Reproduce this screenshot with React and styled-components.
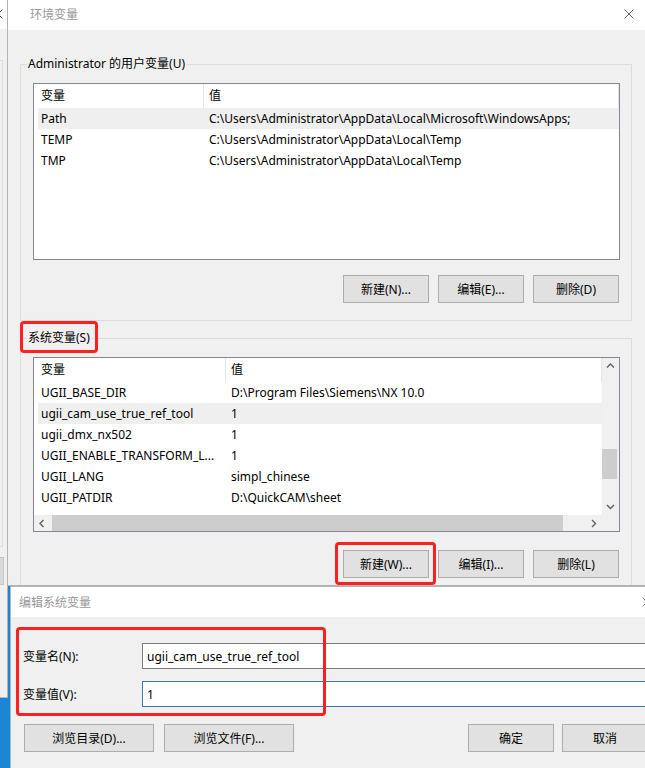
import React from 'react'
import styled, { createGlobalStyle } from 'styled-components'

const GlobalStyle = createGlobalStyle`
  html, body {
    margin: 0;
    padding: 0;
    background: #1b86d3;
  }
`

const Desktop = styled.div`
  position: relative;
  width: 645px;
  height: 768px;
  overflow: hidden;
  background: #1b86d3;
  font-family: "Noto Sans", "Noto Sans CJK SC", sans-serif;
  font-size: 12px;
  color: #000;
`

const Window = styled.div`
  position: absolute;
  left: ${p => p.$x}px;
  top: ${p => p.$y}px;
  width: ${p => p.$w}px;
  height: ${p => p.$h}px;
  box-sizing: border-box;
  border: 1px solid #b4b4b4;
  background: #f0f0f0;
  display: flex;
  flex-direction: column;
  overflow: hidden;
`

const TitleBar = styled.div`
  flex: none;
  box-sizing: border-box;
  height: ${p => p.$h}px;
  background: #fff;
  display: flex;
  align-items: center;
  justify-content: space-between;
  padding: 0 ${p => p.$pr}px ${p => p.$pb || 0}px ${p => p.$pl}px;
  color: #999;
  font-size: 12px;
`

const MainBody = styled.div`
  padding: 26px 0 0 12px;
`

const Group = styled.fieldset`
  box-sizing: border-box;
  width: 612px;
  margin: ${p => p.$mt || 0}px 0 0 0;
  padding: 11px 11px ${p => p.$pb}px 12px;
  border: 1px solid #dcdcdc;
  min-width: 0;
`

const Legend = styled.legend`
  padding: 0 1px;
  margin-left: -6px;
  line-height: 16px;
  font-size: 12px;
  color: #000;
`

const ListBox = styled.div`
  box-sizing: border-box;
  height: ${p => p.$h}px;
  border: 1px solid #828790;
  background: #fff;
  display: grid;
  grid-template-columns: ${p => (p.$scroll ? '1fr 17px' : '1fr')};
  grid-template-rows: ${p => (p.$scroll ? '1fr 16px' : '1fr')};
  overflow: hidden;
`

const ListContent = styled.div`
  display: flex;
  flex-direction: column;
  overflow: hidden;
  min-width: 0;
`

const Header = styled.div`
  flex: none;
  height: 24px;
  display: flex;
`

const HeadCell = styled.div`
  box-sizing: border-box;
  width: ${p => (p.$w ? `${p.$w}px` : 'auto')};
  flex: ${p => (p.$w ? 'none' : '1')};
  padding-left: ${p => p.$pl}px;
  line-height: 24px;
  border-right: 1px solid #e5e5e5;
`

const Row = styled.div`
  flex: none;
  height: 21px;
  margin-left: 4px;
  display: flex;
  align-items: center;
  background: ${p => (p.$selected ? '#efefef' : 'transparent')};
  white-space: nowrap;
`

const Cell = styled.div`
  box-sizing: border-box;
  width: ${p => (p.$w ? `${p.$w}px` : 'auto')};
  flex: ${p => (p.$w ? 'none' : '1')};
  padding-left: ${p => p.$pl}px;
  overflow: hidden;
`

const VScroll = styled.div`
  background: #f0f0f0;
  display: flex;
  flex-direction: column;
`

const HScroll = styled.div`
  background: #f0f0f0;
  display: flex;
`

const Corner = styled.div`
  background: #f0f0f0;
`

const Arrow = styled.div`
  flex: none;
  width: 17px;
  height: ${p => (p.$h ? '16px' : '17px')};
  display: flex;
  align-items: center;
  justify-content: center;
`

const VTrack = styled.div`
  flex: 1;
  padding-top: 74px;
`

const VThumb = styled.div`
  width: 15px;
  height: 30px;
  background: #cdcdcd;
`

const HTrack = styled.div`
  flex: 1;
  padding-left: 1px;
  display: flex;
`

const HThumb = styled.div`
  width: 511px;
  height: 16px;
  background: #cdcdcd;
`

const ButtonRow = styled.div`
  display: flex;
  justify-content: ${p => p.$justify || 'flex-end'};
  gap: ${p => p.$gap || 9}px;
  margin-top: ${p => p.$mt}px;
  padding: 0 ${p => p.$pr || 0}px 0 ${p => p.$pl || 0}px;
`

const ButtonGroup = styled.div`
  display: flex;
  gap: ${p => p.$gap}px;
`

const Button = styled.div`
  box-sizing: border-box;
  width: ${p => p.$w || 86}px;
  height: 28px;
  border: 1px solid #adadad;
  background: #e1e1e1;
  display: flex;
  align-items: center;
  justify-content: center;
  font-size: 12px;
  white-space: nowrap;
`

const Form = styled.div`
  display: grid;
  grid-template-columns: 119px 1fr;
  row-gap: 12px;
  align-items: center;
  padding: 26px 0 0 12px;
`

const FieldLabel = styled.label`
  font-size: 12px;
`

const TextInput = styled.input`
  box-sizing: border-box;
  width: 100%;
  height: 26px;
  margin: 0;
  padding: 0 0 0 4px;
  border: 1px solid ${p => (p.$focused ? '#3d7ab5' : '#7a7a7a')};
  background: #fff;
  font: inherit;
  font-size: 12px;
  color: #000;
  outline: none;
`

const BackBody = styled.div`
  flex: 1;
  display: flex;
  flex-direction: column;
  align-items: flex-end;
  padding-right: 4px;
`

const BackPanel = styled.div`
  width: 200px;
  height: 485px;
  margin-top: 31px;
  border: 1px solid #dcdcdc;
`

const BackButton = styled.div`
  width: 90px;
  height: 28px;
  margin-top: 10px;
  margin-right: -1px;
  box-sizing: border-box;
  border: 1px solid #c4c4c4;
  background: #dadada;
`

const Mark = styled.div`
  position: absolute;
  left: ${p => p.$x}px;
  top: ${p => p.$y}px;
  width: ${p => p.$w}px;
  height: ${p => p.$h}px;
  box-sizing: border-box;
  border: 3px solid #ff1f1f;
  border-radius: 4px;
  pointer-events: none;
`

const CloseIcon = ({ color = '#666' }) => (
  <svg width="10" height="10" viewBox="0 0 10 10">
    <path d="M0.5 0.5L9.5 9.5M9.5 0.5L0.5 9.5" stroke={color} strokeWidth="1" fill="none" />
  </svg>
)

const chevrons = {
  up: 'M1 5.5L4.5 2L8 5.5',
  down: 'M1 3L4.5 6.5L8 3',
  left: 'M5.5 1L2 4.5L5.5 8',
  right: 'M3 1L6.5 4.5L3 8',
}

const Chevron = ({ dir }) => (
  <svg width="9" height="9" viewBox="0 0 9 9">
    <path d={chevrons[dir]} stroke="#606060" strokeWidth="1.4" fill="none" />
  </svg>
)

const userVars = [
  ['Path', 'C:\\Users\\Administrator\\AppData\\Local\\Microsoft\\WindowsApps;', true],
  ['TEMP', 'C:\\Users\\Administrator\\AppData\\Local\\Temp'],
  ['TMP', 'C:\\Users\\Administrator\\AppData\\Local\\Temp'],
]

const sysVars = [
  ['UGII_BASE_DIR', 'D:\\Program Files\\Siemens\\NX 10.0'],
  ['ugii_cam_use_true_ref_tool', '1', true],
  ['ugii_dmx_nx502', '1'],
  ['UGII_ENABLE_TRANSFORM_L...', '1'],
  ['UGII_LANG', 'simpl_chinese'],
  ['UGII_PATDIR', 'D:\\QuickCAM\\sheet'],
]

const VarList = ({ rows, col, height, scroll }) => (
  <ListBox $h={height} $scroll={scroll}>
    <ListContent>
      <Header>
        <HeadCell $w={col} $pl={7}>变量</HeadCell>
        <HeadCell $pl={5}>值</HeadCell>
      </Header>
      {rows.map(([name, value, selected]) => (
        <Row key={name} $selected={selected}>
          <Cell $w={col - 4} $pl={3}>{name}</Cell>
          <Cell $pl={5}>{value}</Cell>
        </Row>
      ))}
    </ListContent>
    {scroll && (
      <>
        <VScroll>
          <Arrow><Chevron dir="up" /></Arrow>
          <VTrack><VThumb /></VTrack>
          <Arrow><Chevron dir="down" /></Arrow>
        </VScroll>
        <HScroll>
          <Arrow $h><Chevron dir="left" /></Arrow>
          <HTrack><HThumb /></HTrack>
          <Arrow $h><Chevron dir="right" /></Arrow>
        </HScroll>
        <Corner />
      </>
    )}
  </ListBox>
)

const App = () => {
  return (
    <Desktop>
      <GlobalStyle />

      <Window $x={-300} $y={-1} $w={308} $h={699}>
        <TitleBar $h={29} $pl={8} $pr={4} $pb={2}>
          <span />
          <CloseIcon color="#444" />
        </TitleBar>
        <BackBody>
          <BackPanel />
          <BackButton />
        </BackBody>
      </Window>

      <Window $x={7} $y={-1} $w={660} $h={587}>
        <TitleBar $h={30} $pl={22} $pr={32} $pb={3}>
          <span>环境变量</span>
          <CloseIcon />
        </TitleBar>
        <MainBody>
          <Group $pb={17}>
            <Legend>Administrator 的用户变量(U)</Legend>
            <VarList rows={userVars} col={170} height={177} />
            <ButtonRow $mt={15} $pr={1}>
              <Button>新建(N)...</Button>
              <Button>编辑(E)...</Button>
              <Button>删除(D)</Button>
            </ButtonRow>
          </Group>
          <Group $mt={9} $pb={20}>
            <Legend>系统变量(S)</Legend>
            <VarList rows={sysVars} col={192} height={175} scroll />
            <ButtonRow $mt={18} $pr={1}>
              <Button>新建(W)...</Button>
              <Button>编辑(I)...</Button>
              <Button>删除(L)</Button>
            </ButtonRow>
          </Group>
        </MainBody>
      </Window>

      <Window $x={10} $y={586} $w={650} $h={200}>
        <TitleBar $h={30} $pl={8} $pr={7}>
          <span>编辑系统变量</span>
          <CloseIcon color="#888" />
        </TitleBar>
        <Form>
          <FieldLabel>变量名(N):</FieldLabel>
          <TextInput readOnly value="ugii_cam_use_true_ref_tool" />
          <FieldLabel>变量值(V):</FieldLabel>
          <TextInput readOnly value="1" $focused />
        </Form>
        <ButtonRow $mt={17} $justify="space-between" $pl={13} $pr={11}>
          <ButtonGroup $gap={10}>
            <Button $w={130}>浏览目录(D)...</Button>
            <Button $w={130}>浏览文件(F)...</Button>
          </ButtonGroup>
          <ButtonGroup $gap={8}>
            <Button>确定</Button>
            <Button>取消</Button>
          </ButtonGroup>
        </ButtonRow>
      </Window>

      <Mark $x={20} $y={321} $w={78} $h={32} />
      <Mark $x={335} $y={542} $w={101} $h={43} />
      <Mark $x={16} $y={627} $w={310} $h={89} />
    </Desktop>
  )
}

export default App
